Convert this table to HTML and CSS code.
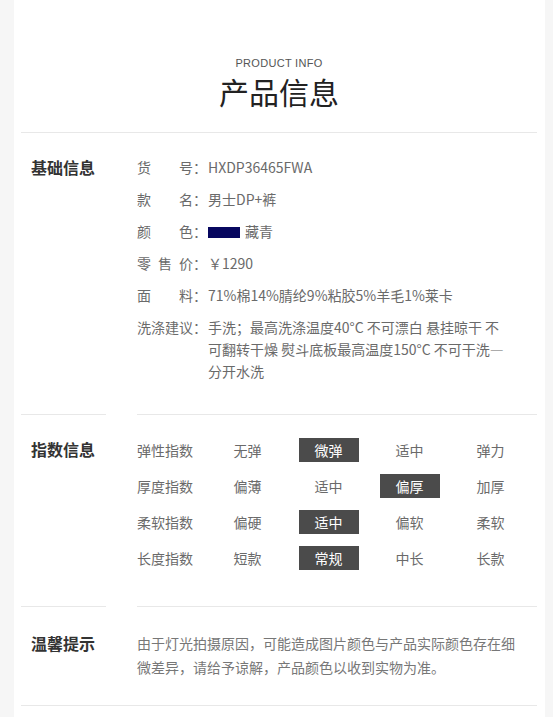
FILE: index.html
```
<!DOCTYPE html>
<html lang="zh-CN">
<head>
    <meta charset="UTF-8">
    <meta name="viewport" content="width=device-width, initial-scale=1.0">
    <title>产品信息</title>
    <link rel="stylesheet" href="styles.css">
</head>
<body>
    <div class="page">
        <div class="title">
            <p class="title-en">PRODUCT INFO</p>
            <h1 class="title-cn">产品信息</h1>
        </div>

        <div class="info">
            <!-- 基础信息 -->
            <section class="block block-basic">
                <h2 class="block-head">基础信息</h2>
                <div class="block-body">
                    <div class="spec-row">
                        <span class="spec-label"><span class="spec-name">货 号</span>：</span>
                        <span class="spec-value">HXDP36465FWA</span>
                    </div>
                    <div class="spec-row">
                        <span class="spec-label"><span class="spec-name">款 名</span>：</span>
                        <span class="spec-value">男士DP+裤</span>
                    </div>
                    <div class="spec-row">
                        <span class="spec-label"><span class="spec-name">颜 色</span>：</span>
                        <span class="spec-value"><i class="swatch"></i>藏青</span>
                    </div>
                    <div class="spec-row">
                        <span class="spec-label"><span class="spec-name">零 售 价</span>：</span>
                        <span class="spec-value">￥1290</span>
                    </div>
                    <div class="spec-row">
                        <span class="spec-label"><span class="spec-name">面 料</span>：</span>
                        <span class="spec-value">71%棉14%腈纶9%粘胶5%羊毛1%莱卡</span>
                    </div>
                    <div class="spec-row">
                        <span class="spec-label"><span class="spec-name">洗涤建议</span>：</span>
                        <span class="spec-value">手洗；最高洗涤温度40°C 不可漂白 悬挂晾干 不可翻转干燥 熨斗底板最高温度150°C 不可干洗—分开水洗</span>
                    </div>
                </div>
            </section>

            <!-- 指数信息 -->
            <section class="block block-index">
                <h2 class="block-head">指数信息</h2>
                <div class="block-body index-grid">
                    <span class="index-label">弹性指数</span>
                    <span class="index-opt">无弹</span>
                    <span class="index-opt active">微弹</span>
                    <span class="index-opt">适中</span>
                    <span class="index-opt">弹力</span>

                    <span class="index-label">厚度指数</span>
                    <span class="index-opt">偏薄</span>
                    <span class="index-opt">适中</span>
                    <span class="index-opt active">偏厚</span>
                    <span class="index-opt">加厚</span>

                    <span class="index-label">柔软指数</span>
                    <span class="index-opt">偏硬</span>
                    <span class="index-opt active">适中</span>
                    <span class="index-opt">偏软</span>
                    <span class="index-opt">柔软</span>

                    <span class="index-label">长度指数</span>
                    <span class="index-opt">短款</span>
                    <span class="index-opt active">常规</span>
                    <span class="index-opt">中长</span>
                    <span class="index-opt">长款</span>
                </div>
            </section>

            <!-- 温馨提示 -->
            <section class="block block-tip">
                <h2 class="block-head">温馨提示</h2>
                <div class="block-body">
                    <p class="tip-text">由于灯光拍摄原因，可能造成图片颜色与产品实际颜色存在细微差异，请给予谅解，产品颜色以收到实物为准。</p>
                </div>
            </section>
        </div>
    </div>
</body>
</html>
```

FILE: styles.css
```
* {
    box-sizing: border-box;
    font-family: "Noto Sans CJK SC", "Noto Sans", sans-serif;
}

body {
    background: #f6f6f6;
    margin: 0;
    color: #6a6a6a;
}

.page {
    width: 531px;
    min-height: 100vh;
    margin-left: 14px;
    padding: 0 8px 0 7px;
    background: #fff;
}

/* title */
.title {
    padding: 56px 0 23px;
    border-bottom: 1px solid #e8e8e8;
    text-align: center;
}

.title-en {
    margin: 0;
    font-family: "Liberation Sans", Arial, sans-serif;
    font-size: 11px;
    line-height: 14px;
    color: #555;
    letter-spacing: 0.3px;
}

.title-cn {
    margin: 3px 0 0;
    font-size: 30px;
    line-height: 36px;
    font-weight: 400;
    color: #222;
}

/* sections */
.info {
    border-bottom: 1px solid #e8e8e8;
}

.block {
    display: flex;
}

.block-head {
    flex-shrink: 0;
    width: 85px;
    margin: 0 31px 0 0;
    padding-left: 10px;
    font-size: 16px;
    font-weight: 700;
    color: #333;
}

.block-body {
    flex: 1;
    padding-right: 20px;
    font-size: 14px;
}

.block + .block .block-head,
.block + .block .block-body {
    border-top: 1px solid #e8e8e8;
}

.block-basic .block-head,
.block-basic .block-body {
    padding-top: 23px;
    padding-bottom: 32px;
    line-height: 22px;
}

.block-index .block-head,
.block-index .block-body {
    padding-top: 23px;
    padding-bottom: 36px;
    line-height: 22px;
}

.block-tip .block-head,
.block-tip .block-body {
    padding-top: 24px;
    padding-bottom: 26px;
    line-height: 24px;
}

/* basic info rows */
.spec-row {
    display: flex;
    margin-bottom: 10px;
}

.spec-row:last-child {
    margin-bottom: 0;
}

.spec-label {
    flex-shrink: 0;
    width: 71px;
    white-space: nowrap;
}

.spec-name {
    display: inline-block;
    width: 56px;
    text-align: justify;
    text-align-last: justify;
}

.spec-value {
    max-width: 300px;
}

.swatch {
    display: inline-block;
    width: 32px;
    height: 11px;
    margin-right: 5px;
    vertical-align: -1px;
    background: #07075f;
}

/* index grid */
.block-body.index-grid {
    display: grid;
    grid-template-columns: 70px repeat(4, 81px);
    align-content: start;
    align-items: center;
    row-gap: 12px;
    padding-right: 0;
}

.index-label,
.index-opt {
    line-height: 24px;
}

.index-opt {
    justify-self: center;
    width: 60px;
    text-align: center;
}

.index-opt.active {
    background: #4b4b4b;
    color: #fff;
}

/* tip */
.tip-text {
    margin: 0;
    color: #777;
}
```
